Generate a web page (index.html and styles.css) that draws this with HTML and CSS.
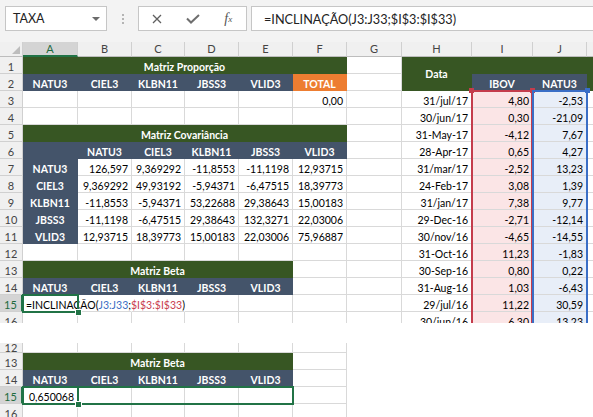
FILE: index.html
```html
<!DOCTYPE html>
<html lang="pt">
<head>
<meta charset="utf-8">
<title>Matriz Beta</title>
<link rel="stylesheet" href="styles.css">
</head>
<body>
<div class="shot1">
  <div class="fbar">
    <div class="namebox"><span class="nb-text">TAXA</span><span class="nb-arrow"></span></div>
    <div class="dots"><i></i><i></i><i></i></div>
    <div class="btns">
      <span class="btn"><svg width="10" height="10" viewBox="0 0 10 10"><path d="M1 1 L9 9 M9 1 L1 9" stroke="#5f5f5f" stroke-width="1.3" fill="none"/></svg></span>
      <span class="btn"><svg width="14" height="10" viewBox="0 0 14 10"><path d="M1 4.5 L5 8.5 L13 1" stroke="#6e6e6e" stroke-width="2" fill="none"/></svg></span>
      <span class="btn fx"><i>f</i><sub>x</sub></span>
    </div>
    <div class="fbox">=INCLINAÇÃO(J3:J33;$I$3:$I$33)</div>
  </div>
  <div class="grid g1">
    <!-- header -->
    <div class="c ch corner"><svg width="8" height="8" viewBox="0 0 8 8"><polygon points="8,0 8,8 0,8" fill="#BDBDBD"/></svg></div>
    <div class="c ch hsel">A</div><div class="c ch">B</div><div class="c ch">C</div><div class="c ch">D</div><div class="c ch">E</div><div class="c ch">F</div><div class="c ch">G</div><div class="c ch">H</div><div class="c ch">I</div><div class="c ch">J</div><div class="c ch"></div>
    <!-- 1 -->
    <div class="c rh">1</div>
    <div class="c gr s6">Matriz Proporção</div>
    <div class="c"></div>
    <div class="c gr data">Data</div>
    <div class="c gr"></div><div class="c gr"></div><div class="c gr"></div>
    <!-- 2 -->
    <div class="c rh">2</div>
    <div class="c sl">NATU3</div><div class="c sl">CIEL3</div><div class="c sl">KLBN11</div><div class="c sl">JBSS3</div><div class="c sl">VLID3</div>
    <div class="c or">TOTAL</div>
    <div class="c"></div>
    <div class="c sl">IBOV</div><div class="c sl">NATU3</div><div class="c gr"></div>
    <!-- 3 -->
    <div class="c rh">3</div>
    <div class="c"></div><div class="c"></div><div class="c"></div><div class="c"></div><div class="c"></div>
    <div class="c r">0,00</div><div class="c"></div>
    <div class="c r">31/jul/17</div><div class="c r pk">4,80</div><div class="c r bl">-2,53</div><div class="c"></div>
    <!-- 4 -->
    <div class="c rh">4</div>
    <div class="c"></div><div class="c"></div><div class="c"></div><div class="c"></div><div class="c"></div><div class="c"></div><div class="c"></div>
    <div class="c r">30/jun/17</div><div class="c r pk">0,30</div><div class="c r bl">-21,09</div><div class="c"></div>
    <!-- 5 -->
    <div class="c rh">5</div>
    <div class="c gr s6">Matriz Covariância</div><div class="c"></div>
    <div class="c r">31-May-17</div><div class="c r pk">-4,12</div><div class="c r bl">7,67</div><div class="c"></div>
    <!-- 6 -->
    <div class="c rh">6</div>
    <div class="c sl"></div><div class="c sl">NATU3</div><div class="c sl">CIEL3</div><div class="c sl">KLBN11</div><div class="c sl">JBSS3</div><div class="c sl">VLID3</div><div class="c"></div>
    <div class="c r">28-Apr-17</div><div class="c r pk">0,65</div><div class="c r bl">4,27</div><div class="c"></div>
    <!-- 7 -->
    <div class="c rh">7</div>
    <div class="c sl">NATU3</div><div class="c r">126,597</div><div class="c r">9,369292</div><div class="c r">-11,8553</div><div class="c r">-11,1198</div><div class="c r">12,93715</div><div class="c"></div>
    <div class="c r">31/mar/17</div><div class="c r pk">-2,52</div><div class="c r bl">13,23</div><div class="c"></div>
    <!-- 8 -->
    <div class="c rh">8</div>
    <div class="c sl">CIEL3</div><div class="c r">9,369292</div><div class="c r">49,93192</div><div class="c r">-5,94371</div><div class="c r">-6,47515</div><div class="c r">18,39773</div><div class="c"></div>
    <div class="c r">24-Feb-17</div><div class="c r pk">3,08</div><div class="c r bl">1,39</div><div class="c"></div>
    <!-- 9 -->
    <div class="c rh">9</div>
    <div class="c sl">KLBN11</div><div class="c r">-11,8553</div><div class="c r">-5,94371</div><div class="c r">53,22688</div><div class="c r">29,38643</div><div class="c r">15,00183</div><div class="c"></div>
    <div class="c r">31/jan/17</div><div class="c r pk">7,38</div><div class="c r bl">9,77</div><div class="c"></div>
    <!-- 10 -->
    <div class="c rh">10</div>
    <div class="c sl">JBSS3</div><div class="c r">-11,1198</div><div class="c r">-6,47515</div><div class="c r">29,38643</div><div class="c r">132,3271</div><div class="c r">22,03006</div><div class="c"></div>
    <div class="c r">29-Dec-16</div><div class="c r pk">-2,71</div><div class="c r bl">-12,14</div><div class="c"></div>
    <!-- 11 -->
    <div class="c rh">11</div>
    <div class="c sl">VLID3</div><div class="c r">12,93715</div><div class="c r">18,39773</div><div class="c r">15,00183</div><div class="c r">22,03006</div><div class="c r">75,96887</div><div class="c"></div>
    <div class="c r">30/nov/16</div><div class="c r pk">-4,65</div><div class="c r bl">-14,55</div><div class="c"></div>
    <!-- 12 -->
    <div class="c rh">12</div>
    <div class="c"></div><div class="c"></div><div class="c"></div><div class="c"></div><div class="c"></div><div class="c"></div><div class="c"></div>
    <div class="c r">31-Oct-16</div><div class="c r pk">11,23</div><div class="c r bl">-1,83</div><div class="c"></div>
    <!-- 13 -->
    <div class="c rh">13</div>
    <div class="c gr s5">Matriz Beta</div><div class="c"></div><div class="c"></div>
    <div class="c r">30-Sep-16</div><div class="c r pk">0,80</div><div class="c r bl">0,22</div><div class="c"></div>
    <!-- 14 -->
    <div class="c rh">14</div>
    <div class="c sl">NATU3</div><div class="c sl">CIEL3</div><div class="c sl">KLBN11</div><div class="c sl">JBSS3</div><div class="c sl">VLID3</div><div class="c"></div><div class="c"></div>
    <div class="c r">31-Aug-16</div><div class="c r pk">1,03</div><div class="c r bl">-6,43</div><div class="c"></div>
    <!-- 15 -->
    <div class="c rh hsel">15</div>
    <div class="c edit nob">=INCLINAÇÃO(<span class="fblue">J3:J33</span>;<span class="fred">$I$3:$I$33</span>)</div><div class="c nob"></div><div class="c nob"></div><div class="c"></div><div class="c"></div><div class="c"></div><div class="c"></div>
    <div class="c r">29/jul/16</div><div class="c r pk">11,22</div><div class="c r bl">30,59</div><div class="c"></div>
    <!-- 16 -->
    <div class="c rh">16</div>
    <div class="c"></div><div class="c"></div><div class="c"></div><div class="c"></div><div class="c"></div><div class="c"></div><div class="c"></div>
    <div class="c r">30/jun/16</div><div class="c r pk">6,30</div><div class="c r bl">13,23</div><div class="c"></div>

    <div class="rng rng-i"></div>
    <div class="rng rng-j"></div>
    <div class="selbox sel-top"><span class="fh"></span></div>
  </div>
</div>

<div class="shot2">
  <div class="grid g2">
    <div class="c rh short">12</div>
    <div class="c"></div><div class="c"></div><div class="c"></div><div class="c"></div><div class="c"></div><div class="c"></div>
    <div class="c rh">13</div>
    <div class="c gr s5">Matriz Beta</div><div class="c"></div>
    <div class="c rh">14</div>
    <div class="c sl">NATU3</div><div class="c sl">CIEL3</div><div class="c sl">KLBN11</div><div class="c sl">JBSS3</div><div class="c sl">VLID3</div><div class="c"></div>
    <div class="c rh hsel">15</div>
    <div class="c r">0,650068</div><div class="c"></div><div class="c"></div><div class="c"></div><div class="c"></div><div class="c"></div>
    <div class="c rh">16</div>
    <div class="c"></div><div class="c"></div><div class="c"></div><div class="c"></div><div class="c"></div><div class="c"></div>

    <div class="selbox sel-range"></div>
    <div class="selbox sel-cell"><span class="fh"></span></div>
  </div>
</div>
</body>
</html>
```

FILE: styles.css
```css
* { box-sizing: border-box; }

body {
  margin: 0;
  background: #fff;
  font-family: Lato, "Liberation Sans", sans-serif;
  color: #000;
}

/* ---------- first screenshot ---------- */
.shot1 {
  width: 593px;
  height: 323px;
  overflow: hidden;
}

.fbar {
  height: 42px;
  background: #F3F3F3;
  display: flex;
  align-items: flex-start;
  padding: 6px 0 0 5px;
}

.namebox {
  flex: none;
  width: 102px;
  height: 25px;
  background: #fff;
  border: 1px solid #C6C6C6;
  display: flex;
  align-items: center;
  padding: 0 6px 0 7px;
  font-size: 12.5px;
  color: #222;
}
.nb-text { flex: 1; }
.nb-arrow {
  width: 0;
  height: 0;
  border-left: 4px solid transparent;
  border-right: 4px solid transparent;
  border-top: 4px solid #6b6b6b;
}

.dots {
  flex: none;
  display: flex;
  flex-direction: column;
  gap: 2px;
  margin: 8px 14px 0 15px;
}
.dots i {
  display: block;
  width: 2px;
  height: 2px;
  background: #B4B4B4;
}

.btns {
  flex: none;
  width: 109px;
  height: 25px;
  background: #fff;
  border: 1px solid #C6C6C6;
  display: flex;
  align-items: center;
}
.btn {
  width: 36px;
  height: 100%;
  display: flex;
  align-items: center;
  justify-content: center;
}
.fx {
  font-family: "Liberation Serif", serif;
  font-style: italic;
  font-size: 14px;
  color: #555;
}
.fx i { font-style: italic; }
.fx sub {
  font-size: 9px;
  vertical-align: -2px;
}

.fbox {
  flex: none;
  margin-left: 4px;
  width: 400px;
  height: 25px;
  background: #fff;
  border: 1px solid #C6C6C6;
  padding-left: 12px;
  display: flex;
  align-items: center;
  font-size: 12.7px;
  color: #222;
  white-space: nowrap;
}

/* ---------- sheet grids ---------- */
.grid {
  display: grid;
  position: relative;
  font-size: 10.5px;
}
.g1 {
  width: 647px;
  grid-template-columns: 23px 55px 54px 53px 54px 54px 54px 55px 70px 61px 54px 60px;
  grid-template-rows: 15px repeat(16, 17px);
}

.shot2 {
  margin-top: 20px;
  width: 347px;
  height: 74px;
  overflow: hidden;
}
.g2 {
  width: 347px;
  grid-template-columns: 23px 55px 54px 53px 54px 54px 54px;
  grid-template-rows: 10px repeat(4, 17px);
}

.c {
  border-right: 1px solid #D9D9D9;
  border-bottom: 1px solid #D9D9D9;
  display: flex;
  align-items: flex-end;
  padding: 0 3px;
  line-height: 12px;
  white-space: nowrap;
  overflow: hidden;
  min-width: 0;
}
.r { justify-content: flex-end; }

.gr, .sl, .or {
  color: #fff;
  font-weight: 700;
  justify-content: center;
}
.gr { background: #375623; border-color: #375623; }
.sl { background: #44546A; border-color: #44546A; }
.or { background: #ED7D31; border-color: #ED7D31; }
.pk { background: #FBE5E6; }
.bl { background: #E8EEF8; }

.s6 { grid-column: span 6; }
.s5 { grid-column: span 5; }
.data { grid-row: span 2; align-items: center; }

.ch, .rh {
  background: #F0F0F0;
  border-color: #D0D0D0;
  color: #444;
  font-size: 11px;
  justify-content: center;
}
.ch {
  align-items: center;
  border-bottom-color: #BDBDBD;
}
.rh.short {
  line-height: 9px;
  align-items: flex-start;
}
.corner {
  justify-content: flex-end;
  align-items: flex-end;
  padding: 0 2px 2px 0;
}
.hsel {
  background: #D4D4D4;
  color: #1E6B3F;
}
.ch.hsel { border-bottom: 2px solid #217346; }
.rh.hsel { border-right: 2px solid #217346; }

.edit {
  overflow: visible;
  position: relative;
  z-index: 1;
}
.nob { border-right-color: transparent; }
.fblue { color: #3B6FC4; }
.fred { color: #C9404F; }

/* ---------- overlays ---------- */
.rng {
  position: absolute;
  top: -1px;
  left: -1px;
  right: 0;
  bottom: 0;
  border: 2px solid;
  border-bottom: 0;
  pointer-events: none;
}
.rng::before,
.rng::after {
  content: "";
  position: absolute;
  top: -4px;
  width: 5px;
  height: 5px;
  background: currentColor;
}
.rng::before { left: -4px; }
.rng::after { right: -4px; }

.rng-i {
  grid-column: 10 / 11;
  grid-row: 4 / 18;
  color: #C43C4C;
  border-color: #C43C4C;
}
.rng-j {
  grid-column: 11 / 12;
  grid-row: 4 / 18;
  right: -1px;
  color: #3A6EC6;
  border-color: #3A6EC6;
}
.rng-j::before { display: none; }

.selbox {
  position: absolute;
  top: -1px;
  left: -1px;
  right: -1px;
  bottom: -1px;
  border: 2px solid #217346;
  z-index: 2;
}
.sel-top { grid-column: 2 / 3; grid-row: 16 / 17; }
.sel-range { grid-column: 2 / 7; grid-row: 4 / 5; }
.sel-cell { grid-column: 2 / 3; grid-row: 4 / 5; }

.fh {
  position: absolute;
  right: -5px;
  bottom: -5px;
  width: 7px;
  height: 7px;
  background: #217346;
  border: 1px solid #fff;
}
```
